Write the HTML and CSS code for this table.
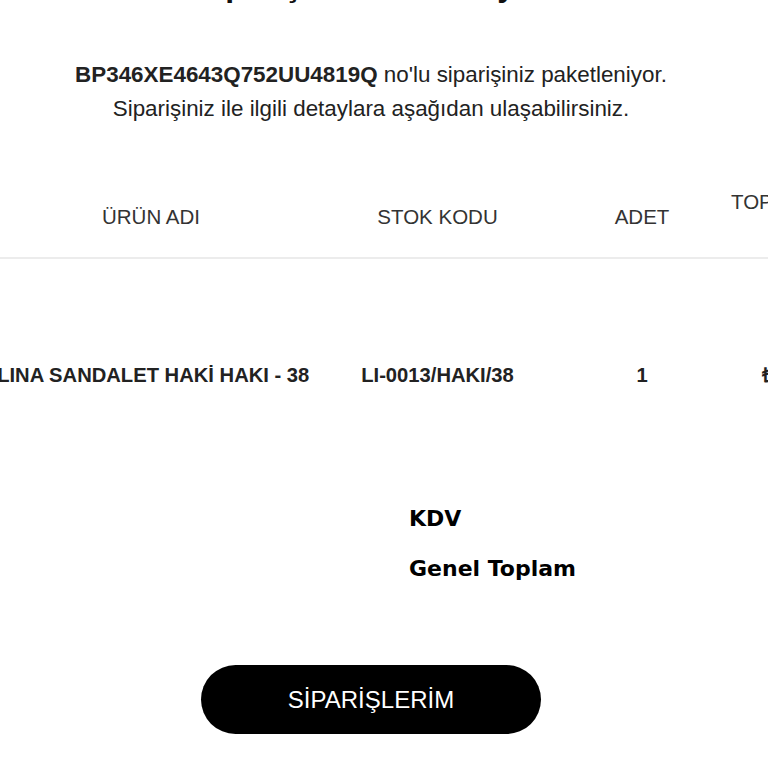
FILE: index.html
```html
<!DOCTYPE html>
<html lang="tr">
<head>
<meta charset="utf-8">
<title>Sipariş</title>
<link rel="stylesheet" href="styles.css">
</head>
<body>
<div class="page">
  <h1 class="title">Siparişiniz Hazırlanıyor</h1>
  <p class="intro"><strong>BP346XE4643Q752UU4819Q</strong> no'lu siparişiniz paketleniyor.<br>Siparişiniz ile ilgili detaylara aşağıdan ulaşabilirsiniz.</p>

  <div class="order">
    <div class="row head">
      <div class="cell c1">ÜRÜN ADI</div>
      <div class="cell c2">STOK KODU</div>
      <div class="cell c3">ADET</div>
      <div class="cell c4">TOPLAM</div>
    </div>
    <div class="row item">
      <div class="cell c1">ELINA SANDALET HAKİ HAKI - 38</div>
      <div class="cell c2">LI-0013/HAKI/38</div>
      <div class="cell c3">1</div>
      <div class="cell c4 price">₺1.299,00</div>
    </div>
  </div>

  <div class="totals">
    <div class="total-line">KDV</div>
    <div class="total-line">Genel Toplam</div>
  </div>

  <div class="actions">
    <a class="btn" href="#">SİPARİŞLERİM</a>
  </div>
</div>
</body>
</html>
```

FILE: styles.css
```css
html, body {
  margin: 0;
  padding: 0;
  overflow: hidden;
  background: #fff;
}
body {
  font-family: "Liberation Sans", Arial, sans-serif;
  color: #222;
}
.page {
  width: 742px;
}
.title {
  margin: -35px 0 0;
  font-size: 32px;
  line-height: 40px;
  font-weight: bold;
  text-align: center;
  color: #111;
  white-space: nowrap;
}
.intro {
  margin: 53px 0 0;
  font-size: 22.4px;
  line-height: 34px;
  text-align: center;
  color: #222;
}
.order {
  margin: 51px 0 0 -25px;
  width: 925px;
}
.row {
  display: grid;
  grid-template-columns: 352px 221px 188px 164px;
  align-items: center;
}
.cell {
  text-align: center;
  font-size: 20.5px;
  line-height: 30px;
}
.head {
  grid-template-rows: 60px;
  padding: 10px 0;
  border-bottom: 2px solid #ececec;
  color: #333;
}
.head .c4 {
  align-self: start;
  text-align: left;
  margin-left: -5px;
}
.item {
  padding: 101px 0 101px;
  font-weight: bold;
  color: #222;
}
.item .cell {
  font-size: 20.2px;
}
.item .c1 {
  white-space: nowrap;
  padding-right: 9px;
}
.item .price {
  text-align: left;
  padding-left: 26px;
}
.totals {
  margin: 3px 0 0 409px;
}
.total-line {
  font-family: "DejaVu Sans", sans-serif;
  font-weight: bold;
  font-size: 22px;
  line-height: 50px;
  color: #000;
}
.actions {
  margin-top: 71px;
  display: flex;
  justify-content: center;
}
.btn {
  display: flex;
  align-items: center;
  justify-content: center;
  width: 340px;
  height: 69px;
  border-radius: 35px;
  background: #000;
  color: #fff;
  font-size: 24px;
  text-decoration: none;
}
```
